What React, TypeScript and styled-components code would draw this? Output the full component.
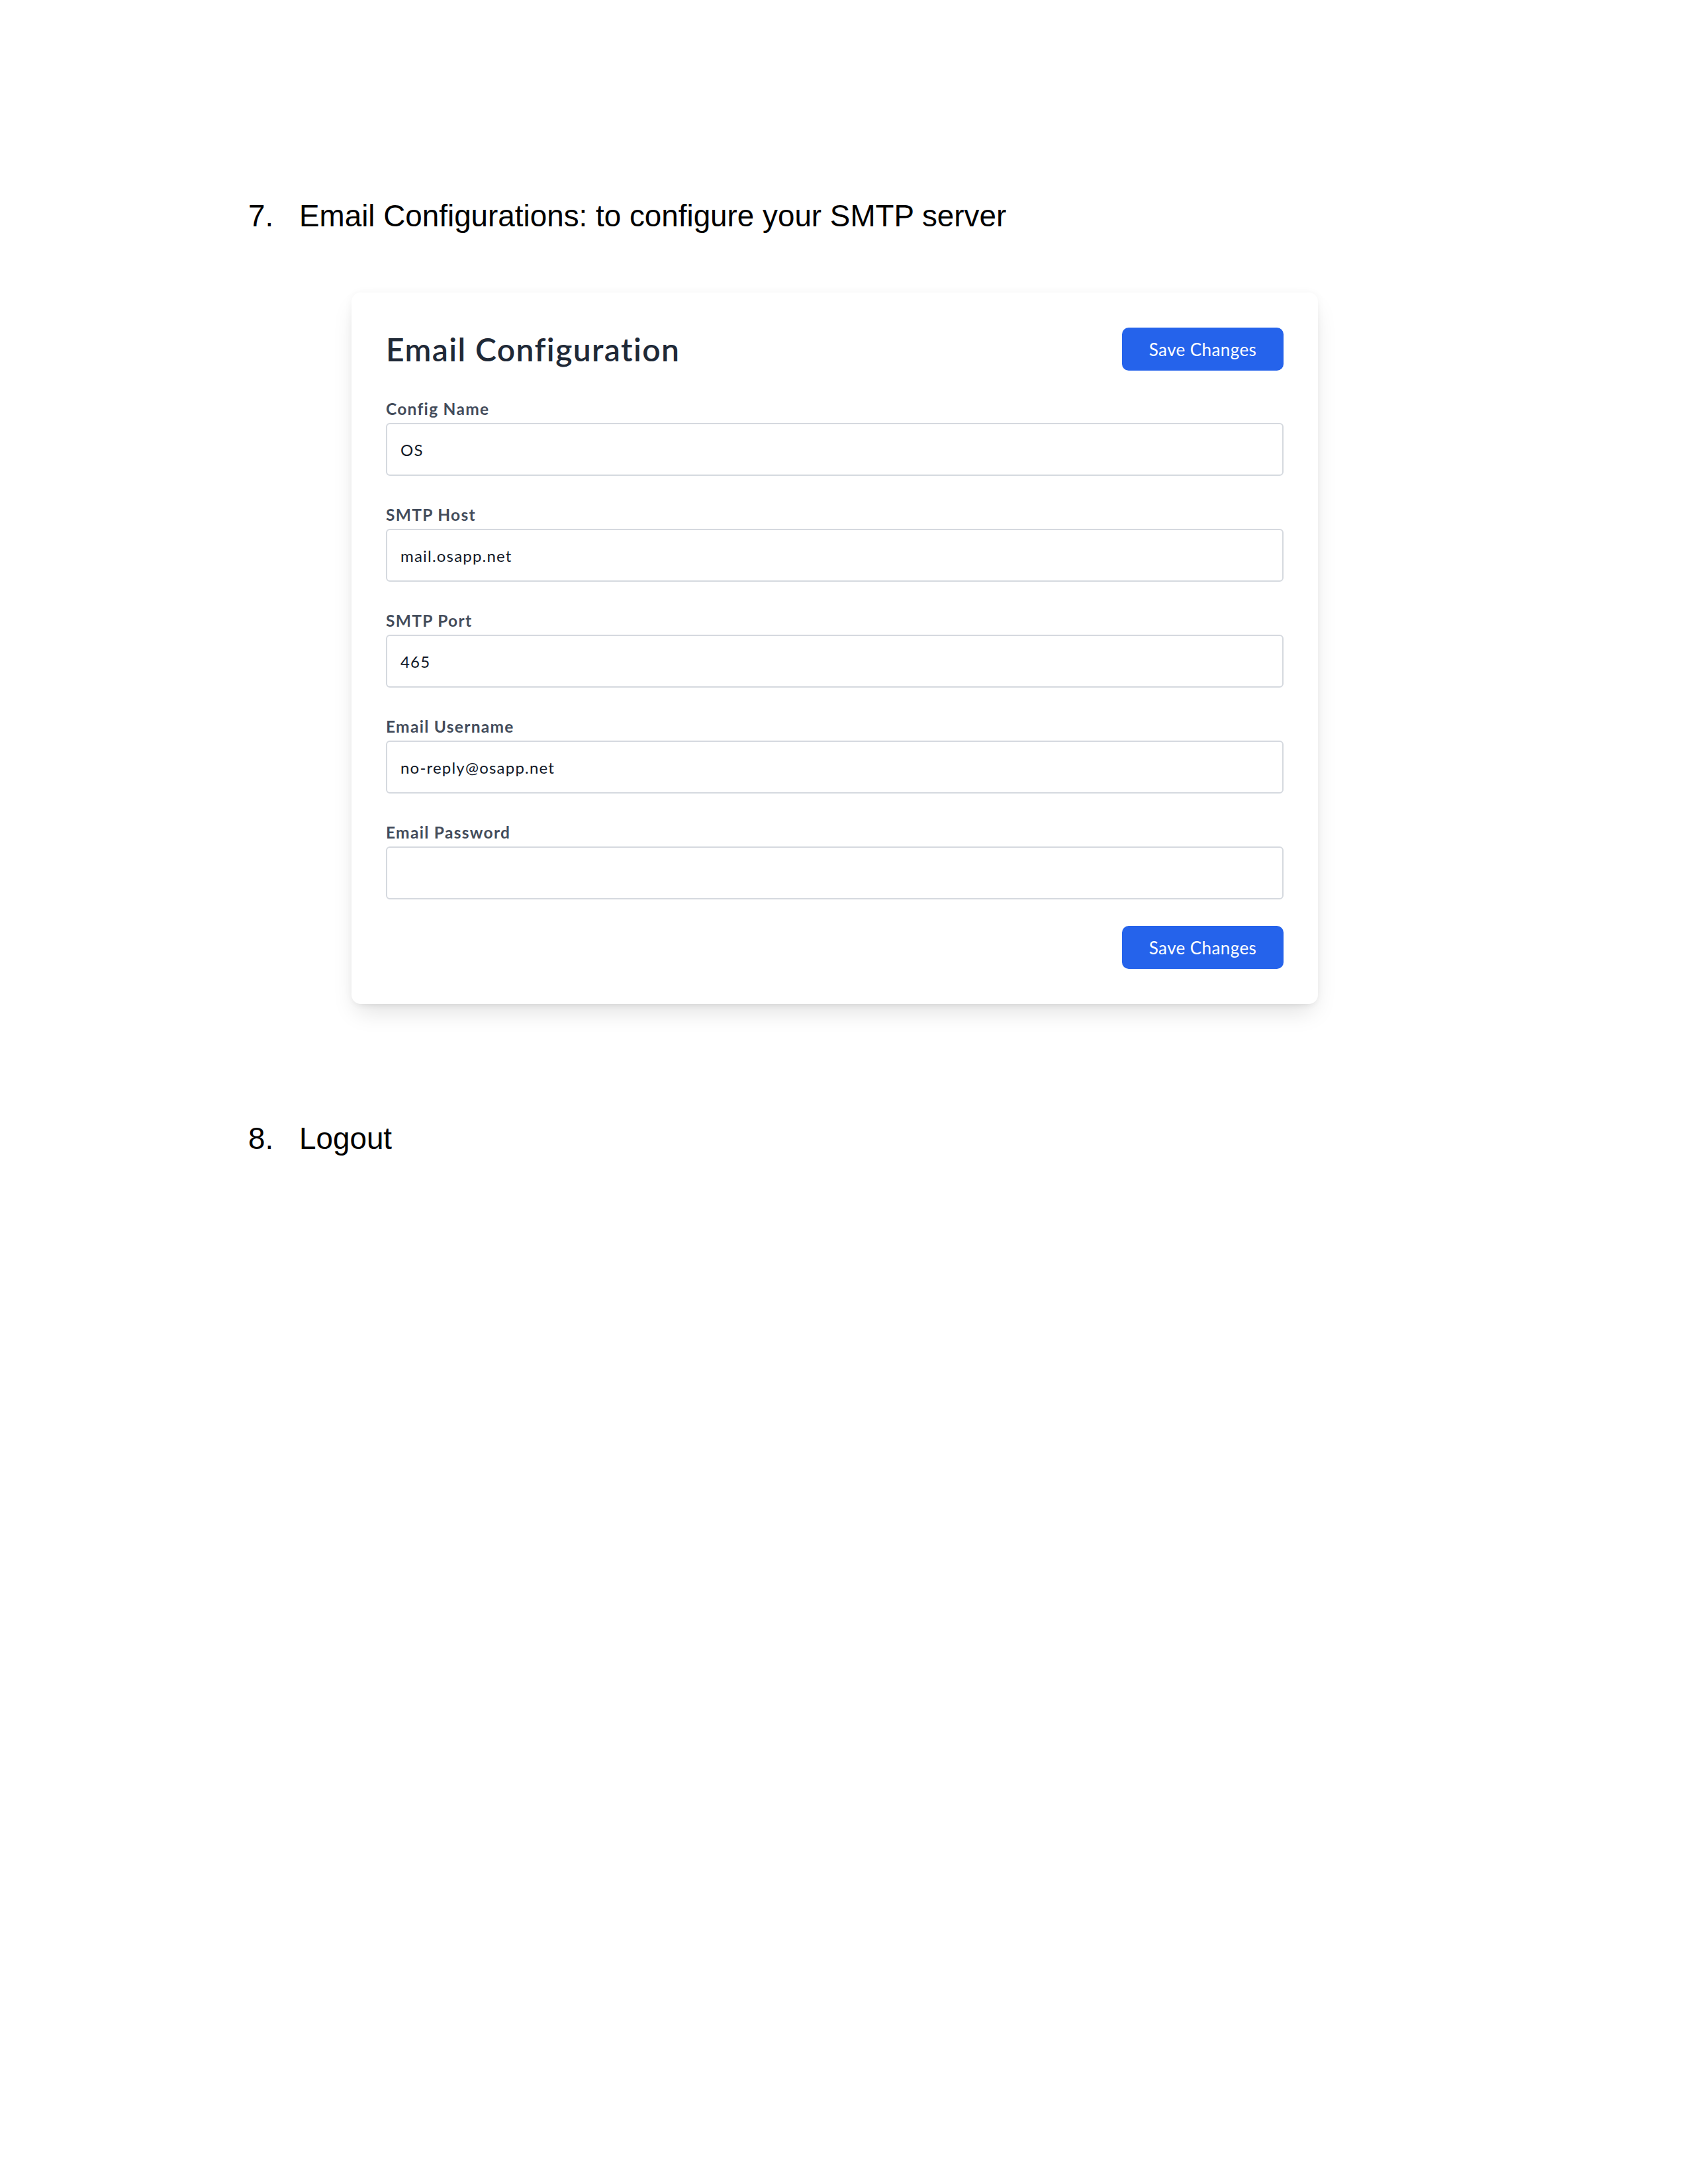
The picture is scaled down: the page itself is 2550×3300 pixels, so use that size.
import React from 'react';
import styled, { createGlobalStyle } from 'styled-components';

const GlobalStyle = createGlobalStyle`
  html, body {
    margin: 0;
    padding: 0;
    background: #ffffff;
  }
  body {
    font-family: 'Liberation Sans', Arial, sans-serif;
  }
`;

const Page = styled.div`
  width: 2550px;
  min-height: 3300px;
  padding-top: 301px;
  box-sizing: border-box;
`;

// numbered step line, like the word doc it came from
const Step = styled.div`
  display: flex;
  align-items: baseline;
  padding-left: 375px;
  font-family: 'Liberation Sans', Arial, sans-serif;
  font-size: 45.8px;
  line-height: 52px;
  color: #000;
`;

const StepNum = styled.span`
  width: 77px;
  flex: none;
`;

const Section = styled.section<{ $gap: number }>`
  margin-top: ${(p) => p.$gap}px;
`;

const Card = styled.div`
  margin-left: 531px;
  width: 1460px;
  box-sizing: border-box;
  padding: 53px 52px;
  background: #fff;
  border-radius: 14px;
  box-shadow: 0 18px 36px -8px rgba(0, 0, 0, 0.13), 0 6px 12px -6px rgba(0, 0, 0, 0.08),
    0 0 14px rgba(0, 0, 0, 0.035);
  font-family: Lato, 'Noto Sans', sans-serif;
  display: flex;
  flex-direction: column;
`;

const Header = styled.div`
  display: flex;
  justify-content: space-between;
  align-items: center;
`;

const Title = styled.h2`
  margin: 0;
  font-size: 48px;
  font-weight: 600;
  letter-spacing: 1.4px;
  color: #1f2937;
  line-height: 60px;
`;

const Button = styled.button`
  width: 244px;
  height: 65px;
  border: none;
  border-radius: 10px;
  background: #2563eb;
  color: #fff;
  font-family: Lato, 'Noto Sans', sans-serif;
  font-size: 26px;
  font-weight: 400;
  letter-spacing: 0.4px;
  cursor: pointer;
`;

const Form = styled.div`
  display: flex;
  flex-direction: column;
  gap: 43px;
  margin-top: 42px;
`;

const Field = styled.div`
  display: flex;
  flex-direction: column;
`;

const Label = styled.label`
  font-size: 24.5px;
  line-height: 32px;
  font-weight: 700;
  letter-spacing: 1.3px;
  color: #434c5b;
  margin-bottom: 5px;
`;

const Input = styled.input`
  height: 80px;
  box-sizing: border-box;
  border: 2px solid #d5d9df;
  border-radius: 6px;
  padding: 0 20px;
  font-family: Lato, 'Noto Sans', sans-serif;
  font-size: 24px;
  letter-spacing: 1.2px;
  color: #111827;
  background: #fff;
  outline: none;
`;

const Footer = styled.div`
  display: flex;
  justify-content: flex-end;
  margin-top: 40px;
`;

const fields = [
  { label: 'Config Name', value: 'OS', type: 'text' },
  { label: 'SMTP Host', value: 'mail.osapp.net', type: 'text' },
  { label: 'SMTP Port', value: '465', type: 'text' },
  { label: 'Email Username', value: 'no-reply@osapp.net', type: 'text' },
  { label: 'Email Password', value: '', type: 'password' },
];

export default function App() {
  return (
    <Page>
      <GlobalStyle />
      <Step>
        <StepNum>7.</StepNum>
        <span>Email Configurations: to configure your SMTP server</span>
      </Step>

      <Section $gap={89}>
        <Card>
          <Header>
            <Title>Email Configuration</Title>
            <Button>Save Changes</Button>
          </Header>
          <Form>
            {fields.map((f) => (
              <Field key={f.label}>
                <Label>{f.label}</Label>
                <Input type={f.type} defaultValue={f.value} />
              </Field>
            ))}
          </Form>
          <Footer>
            <Button>Save Changes</Button>
          </Footer>
        </Card>
      </Section>

      <Section $gap={178}>
        <Step>
          <StepNum>8.</StepNum>
          <span>Logout</span>
        </Step>
      </Section>
    </Page>
  );
}
